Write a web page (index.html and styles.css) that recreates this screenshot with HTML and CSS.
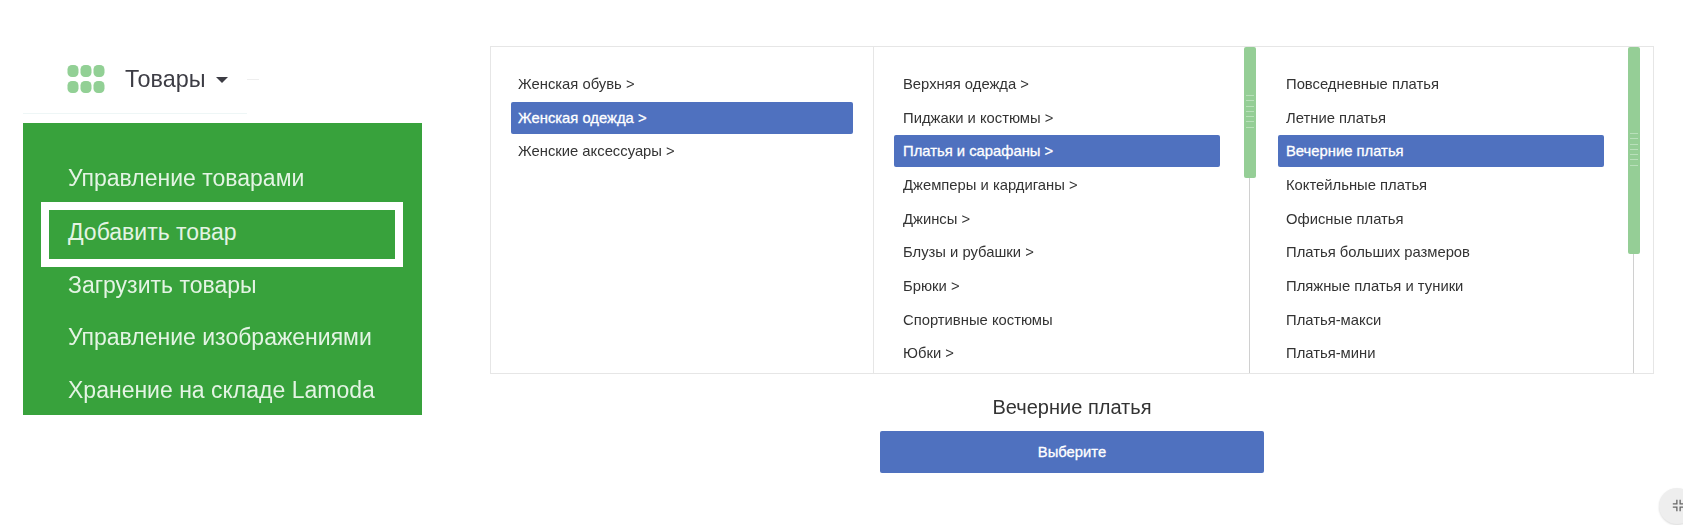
FILE: index.html
```html
<!DOCTYPE html>
<html lang="ru">
<head>
<meta charset="utf-8">
<title>Товары</title>
<link rel="stylesheet" href="styles.css">
</head>
<body>
<main class="page">
  <section class="nav">
    <header class="nav-head">
      <svg class="dots" width="38" height="30" viewBox="0 0 38 30" aria-hidden="true">
        <rect x="0.5" y="1" width="11" height="12" rx="4.5"/><rect x="13.5" y="1" width="11" height="12" rx="4.5"/><rect x="26.5" y="1" width="11" height="12" rx="4.5"/>
        <rect x="0.5" y="17" width="11" height="12" rx="4.5"/><rect x="13.5" y="17" width="11" height="12" rx="4.5"/><rect x="26.5" y="17" width="11" height="12" rx="4.5"/>
      </svg>
      <span class="nav-title">Товары</span>
      <span class="caret"></span>
      <span class="dash"></span>
    </header>
    <ul class="menu">
      <li class="menu-item">Управление товарами</li>
      <li class="menu-item menu-item-marked">Добавить товар</li>
      <li class="menu-item">Загрузить товары</li>
      <li class="menu-item menu-item-far">Управление изображениями</li>
      <li class="menu-item menu-item-far">Хранение на складе Lamoda</li>
    </ul>
  </section>
  <section class="picker">
    <div class="panel">
      <div class="col col-a">
        <ul class="list">
          <li class="row">Женская обувь &gt;</li>
          <li class="row row-on">Женская одежда &gt;</li>
          <li class="row">Женские аксессуары &gt;</li>
        </ul>
      </div>
      <div class="col col-b">
        <ul class="list">
          <li class="row">Верхняя одежда &gt;</li>
          <li class="row">Пиджаки и костюмы &gt;</li>
          <li class="row row-on">Платья и сарафаны &gt;</li>
          <li class="row">Джемперы и кардиганы &gt;</li>
          <li class="row">Джинсы &gt;</li>
          <li class="row">Блузы и рубашки &gt;</li>
          <li class="row">Брюки &gt;</li>
          <li class="row">Спортивные костюмы</li>
          <li class="row">Юбки &gt;</li>
        </ul>
        <div class="track track-b"><div class="thumb thumb-b"><span class="grip"></span></div></div>
      </div>
      <div class="col col-c">
        <ul class="list">
          <li class="row">Повседневные платья</li>
          <li class="row">Летние платья</li>
          <li class="row row-on">Вечерние платья</li>
          <li class="row">Коктейльные платья</li>
          <li class="row">Офисные платья</li>
          <li class="row">Платья больших размеров</li>
          <li class="row">Пляжные платья и туники</li>
          <li class="row">Платья-макси</li>
          <li class="row">Платья-мини</li>
        </ul>
        <div class="track track-c"><div class="thumb thumb-c"><span class="grip"></span></div></div>
      </div>
    </div>
    <h2 class="chosen">Вечерние платья</h2>
    <button class="choose" type="button">Выберите</button>
  </section>
</main>
<div class="corner">
  <svg width="13" height="13" viewBox="0 0 16 16" aria-hidden="true">
    <path d="M6 1v5H1M10 1v5h5M6 15v-5H1M10 15v-5h5"/>
  </svg>
</div>
</body>
</html>
```
FILE: styles.css
```css
* { box-sizing: border-box; }
html, body { margin: 0; padding: 0; height: 100%; }
body {
  background: #fff;
  color: #333;
  font-family: "Liberation Sans", Arial, sans-serif;
  overflow: hidden;
}
ul { list-style: none; margin: 0; padding: 0; }

.page { display: flex; height: 525px; padding-left: 23px; }

/* left navigation crop */
.nav { width: 399px; flex: none; }
.nav-head {
  height: 123px;
  display: flex;
  align-items: center;
  padding: 35px 0 0 44px;
  position: relative;
  filter: blur(0.6px);
}
.nav-head::after {
  content: "";
  position: absolute;
  left: 0;
  width: 224px;
  top: 113px;
  height: 1px;
  background: #eef6f6;
}
.dots { flex: none; fill: #92d095; }
.nav-title { margin-left: 20px; font-size: 23.4px; color: #3c3c44; }
.caret {
  margin-left: 11px;
  margin-top: 1px;
  border-top: 6px solid #3c3c44;
  border-left: 6px solid transparent;
  border-right: 6px solid transparent;
}
.dash { margin-left: 19px; width: 12px; height: 1px; background: #eee; }

.menu {
  height: 292px;
  background: #38a23c;
  padding: 37px 19px 0 18px;
  display: flex;
  flex-direction: column;
}
.menu-item {
  height: 36px;
  padding-left: 27px;
  display: flex;
  align-items: center;
  font-size: 23px;
  color: #e4f4e4;
  filter: blur(0.5px);
  flex: none;
}
.menu-item-marked {
  height: 65px;
  margin-top: 6px;
  border: 8px solid #fff;
  padding-left: 19px;
  padding-bottom: 5px;
  filter: none;
}
.menu-item-far { margin-top: 16.5px; }

/* category picker */
.picker {
  margin-left: 68px;
  width: 1164px;
  flex: none;
  padding-top: 46px;
  display: flex;
  flex-direction: column;
  align-items: center;
}
.panel {
  width: 100%;
  height: 328px;
  border: 1px solid #e6e6e6;
  display: flex;
}
.col { position: relative; flex: none; height: 100%; padding-top: 21px; }
.col-a { width: 383px; padding-left: 20px; padding-right: 20px; border-right: 1px solid #e6e6e6; }
.col-b { width: 376px; padding-left: 20px; padding-right: 30px; }
.col-c { width: 403px; padding-left: 28px; padding-right: 49px; }
.row {
  height: 32px;
  margin-bottom: 1.67px;
  padding-left: 7px;
  display: flex;
  align-items: center;
  font-size: 14.8px;
  color: #333;
  border-radius: 2px;
  white-space: nowrap;
  filter: blur(0.35px);
}
.row-on { background: #4f71bf; color: #fff; -webkit-text-stroke: 0.3px #fff; filter: none; }
.col-b .row { padding-left: 9px; }
.col-c .row { padding-left: 8px; }

.track { position: absolute; top: 0; bottom: 0; width: 1px; background: #d0d0d0; }
.track-b { right: 0; }
.track-c { right: 19px; }
.thumb {
  position: absolute;
  top: 0;
  left: -5px;
  width: 12px;
  background: #95ce96;
  border-radius: 2px;
  display: flex;
  align-items: center;
  justify-content: center;
}
.thumb-b { height: 131px; }
.thumb-c { height: 207px; }
.grip {
  width: 8px;
  height: 35px;
  background: repeating-linear-gradient(#b9e0ba 0 1px, transparent 1px 5.3px);
}

.chosen {
  margin: 21px 0 0;
  height: 24px;
  line-height: 24px;
  font-size: 20px;
  font-weight: 400;
  color: #333;
  filter: blur(0.3px);
}
.choose {
  margin-top: 12px;
  width: 384px;
  height: 42px;
  border: 0;
  border-radius: 2px;
  background: #4f71bf;
  color: #fff;
  -webkit-text-stroke: 0.3px #fff;
  font-family: inherit;
  font-size: 14.8px;
}

.corner {
  position: fixed;
  left: 1659px;
  top: 488px;
  width: 36px;
  height: 36px;
  border-radius: 50%;
  background: #eee;
  box-shadow: 0 1px 2px rgba(0,0,0,.15);
  padding: 11px 0 0 13px;
}
.corner svg { display: block; fill: none; stroke: #666; stroke-width: 1.6; }
```
